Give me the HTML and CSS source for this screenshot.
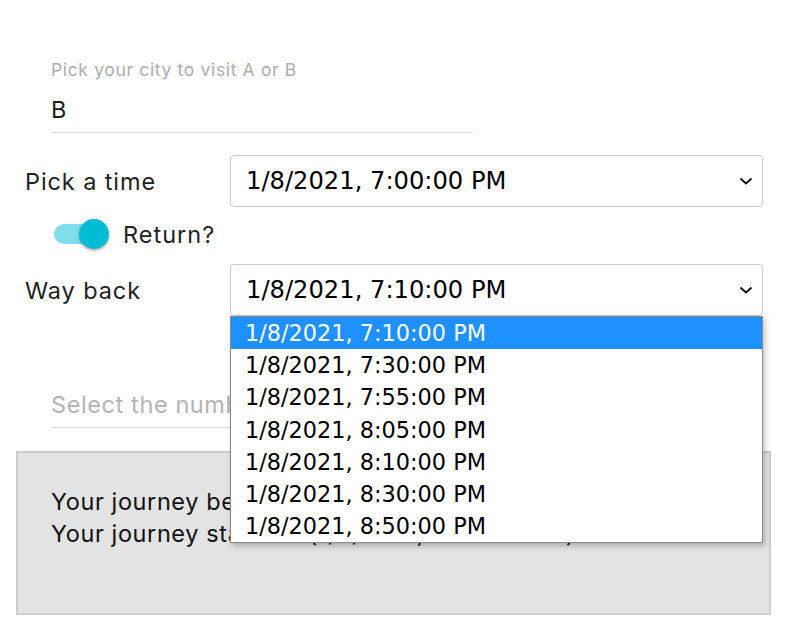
FILE: index.html
```html
<!DOCTYPE html>
<html>
<head>
<meta charset="utf-8">
<link rel="stylesheet" href="styles.css">
</head>
<body>
<div class="page">
  <div class="field city">
    <div class="field-label">Pick your city to visit A or B</div>
    <div class="field-input">B</div>
  </div>

  <div class="row first-row">
    <div class="row-label">Pick a time</div>
    <div class="select">
      <span class="select-value">1/8/2021, 7:00:00 PM</span>
      <svg class="chevron" width="14" height="8" viewBox="0 0 14 8"><path d="M1.5 1.5 L7 6.5 L12.5 1.5" fill="none" stroke="#111" stroke-width="1.8"/></svg>
    </div>
  </div>

  <div class="toggle-row">
    <span class="switch"><span class="track"></span><span class="thumb"></span></span>
    <span class="toggle-text">Return?</span>
  </div>

  <div class="row">
    <div class="row-label">Way back</div>
    <div class="select">
      <span class="select-value">1/8/2021, 7:10:00 PM</span>
      <svg class="chevron" width="14" height="8" viewBox="0 0 14 8"><path d="M1.5 1.5 L7 6.5 L12.5 1.5" fill="none" stroke="#111" stroke-width="1.8"/></svg>
    </div>
  </div>

  <div class="field number">
    <div class="field-input placeholder">Select the number of passengers</div>
  </div>

  <div class="summary">
    <div>Your journey begins in B on Friday</div>
    <div>Your journey starts at (1/8/2021, 7:00:00 PM)</div>
  </div>

  <ul class="dropdown">
    <li class="opt selected">1/8/2021, 7:10:00 PM</li>
    <li class="opt">1/8/2021, 7:30:00 PM</li>
    <li class="opt">1/8/2021, 7:55:00 PM</li>
    <li class="opt">1/8/2021, 8:05:00 PM</li>
    <li class="opt">1/8/2021, 8:10:00 PM</li>
    <li class="opt">1/8/2021, 8:30:00 PM</li>
    <li class="opt">1/8/2021, 8:50:00 PM</li>
  </ul>
</div>
</body>
</html>
```

FILE: styles.css
```css
html, body {
  margin: 0;
  padding: 0;
  background: #fff;
}
body {
  font-family: Inter, "Noto Sans", sans-serif;
  color: #1a1a1a;
}
.page {
  position: relative;
  width: 787px;
  height: 629px;
  overflow: hidden;
}
.field {
  margin-left: 51px;
  width: 422px;
}
.city {
  padding-top: 58px;
}
.field-label {
  font-size: 17.5px;
  letter-spacing: 0.65px;
  line-height: 24px;
  color: #adadad;
}
.field-input {
  font-size: 23.5px;
  letter-spacing: 0.6px;
  line-height: 32px;
  padding-bottom: 6px;
  border-bottom: 1px solid #dcdcdc;
  white-space: nowrap;
  overflow: hidden;
}
.city .field-input {
  margin-top: 12px;
}
.placeholder {
  color: #b3b3b3;
}
.number {
  margin-top: 73px;
}
.row {
  display: flex;
  align-items: center;
  padding-left: 25px;
  margin-top: 10px;
}
.first-row {
  margin-top: 22px;
}
.row-label {
  width: 205px;
  font-size: 23.5px;
  letter-spacing: 0.9px;
  color: #222;
}
.select {
  box-sizing: border-box;
  width: 533px;
  height: 52px;
  border: 1px solid #c8c8c8;
  border-radius: 4px;
  background: #fff;
  display: flex;
  align-items: center;
  justify-content: space-between;
  padding: 0 9px 0 15px;
}
.select-value {
  font-family: "DejaVu Sans", Verdana, sans-serif;
  font-size: 24.2px;
  color: #000;
}
.chevron {
  display: block;
}
.toggle-row {
  display: flex;
  align-items: center;
  height: 40px;
  margin-top: 7px;
  padding-left: 54px;
}
.switch {
  position: relative;
  width: 58px;
  height: 40px;
  margin-right: 11px;
}
.track {
  position: absolute;
  left: 0;
  top: 10px;
  width: 46px;
  height: 20px;
  border-radius: 10px;
  background: #80deea;
}
.thumb {
  position: absolute;
  left: 25px;
  top: 5px;
  width: 30px;
  height: 30px;
  border-radius: 50%;
  background: #00bcd4;
  box-shadow: 0 2px 2px rgba(0,0,0,0.2), 0 1px 4px rgba(0,0,0,0.14);
}
.toggle-text {
  font-size: 23.5px;
  letter-spacing: 1px;
  color: #222;
}
.summary {
  box-sizing: border-box;
  margin: 23px 0 0 16px;
  width: 755px;
  height: 164px;
  background: #e3e3e3;
  border: 2px solid #cdcdcd;
  padding: 33px 0 0 33px;
  font-size: 23.5px;
  letter-spacing: 0.6px;
  line-height: 32px;
  color: #111;
  white-space: nowrap;
}
.dropdown {
  position: absolute;
  left: 230px;
  top: 316px;
  width: 533px;
  box-sizing: border-box;
  margin: 0;
  padding: 0;
  list-style: none;
  background: #fff;
  border: 1px solid #8a8a8a;
  box-shadow: 2px 3px 6px rgba(0,0,0,0.25);
}
.opt {
  height: 32.2px;
  line-height: 32px;
  padding-left: 14px;
  font-family: "DejaVu Sans", Verdana, sans-serif;
  font-size: 22.4px;
  color: #000;
}
.opt.selected {
  background: #1e90ff;
  color: #fff;
}
```
